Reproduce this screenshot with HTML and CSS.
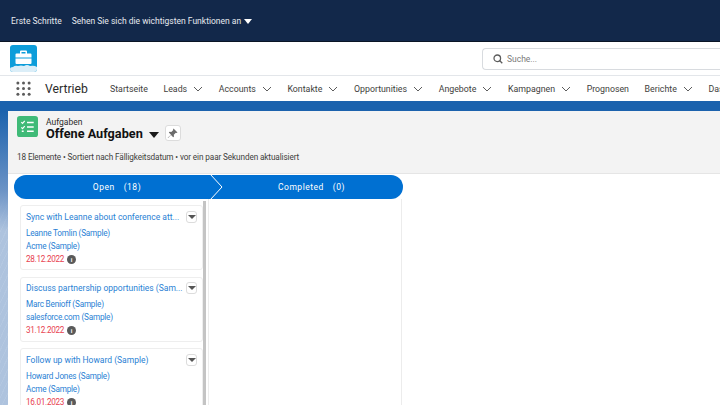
FILE: index.html
```html
<!DOCTYPE html>
<html lang="de">
<head>
<meta charset="utf-8">
<title>Offene Aufgaben</title>
<link rel="stylesheet" href="styles.css">
</head>
<body>
<header class="promo">
  <span>Erste Schritte</span>
  <span class="promo-menu">Sehen Sie sich die wichtigsten Funktionen an <i class="caret caret-white"></i></span>
</header>
<div class="brand">
  <svg class="logo" width="27" height="27" viewBox="0 0 27 27">
    <rect width="27" height="27" rx="3" fill="#0d9dda"/>
    <path d="M0 24q0-2 3-2q2-2 5-1q3-1 6 0q3-2 6 0q4-1 7 1v2q0 3-3 3H3q-3 0-3-3z" fill="#dbeef8"/>
    <path d="M10 8.500V6.500q0-1 1-1h5q1 0 1 1v2h3.500q1 0 1 1v3H5.500v-3q0-1 1-1zM11.500 8.500h4V7h-4zM5.500 13.500h16v4.500q0 1-1 1h-14q-1 0-1-1z" fill="#fff" fill-rule="evenodd"/>
  </svg>
  <div class="search">
    <svg class="search-icon" width="10" height="10" viewBox="0 0 14 14" fill="none" stroke="#5c5c5c" stroke-width="1.800"><circle cx="6" cy="6" r="4.600"/><path d="M9.200 9.200l3.800 3.800"/></svg>
    <span>Suche...</span>
  </div>
</div>
<nav class="nav">
  <svg class="waffle" width="15" height="15" viewBox="0 0 16 16" fill="#5c5c5c">
    <circle cx="2" cy="2" r="1.600"/><circle cx="8" cy="2" r="1.600"/><circle cx="14" cy="2" r="1.600"/>
    <circle cx="2" cy="8" r="1.600"/><circle cx="8" cy="8" r="1.600"/><circle cx="14" cy="8" r="1.600"/>
    <circle cx="2" cy="14" r="1.600"/><circle cx="8" cy="14" r="1.600"/><circle cx="14" cy="14" r="1.600"/>
  </svg>
  <span class="app-name">Vertrieb</span>
  <ul class="tabs">
    <li>Startseite</li>
    <li class="has-menu">Leads <svg class="chev" viewBox="0 0 10 6"><path d="M1 1l4 4 4-4"/></svg></li>
    <li class="has-menu">Accounts <svg class="chev" viewBox="0 0 10 6"><path d="M1 1l4 4 4-4"/></svg></li>
    <li class="has-menu">Kontakte <svg class="chev" viewBox="0 0 10 6"><path d="M1 1l4 4 4-4"/></svg></li>
    <li class="has-menu">Opportunities <svg class="chev" viewBox="0 0 10 6"><path d="M1 1l4 4 4-4"/></svg></li>
    <li class="has-menu">Angebote <svg class="chev" viewBox="0 0 10 6"><path d="M1 1l4 4 4-4"/></svg></li>
    <li class="has-menu">Kampagnen <svg class="chev" viewBox="0 0 10 6"><path d="M1 1l4 4 4-4"/></svg></li>
    <li>Prognosen</li>
    <li class="has-menu">Berichte <svg class="chev" viewBox="0 0 10 6"><path d="M1 1l4 4 4-4"/></svg></li>
    <li>Dashboards</li>
  </ul>
</nav>
<main class="stage">
  <section class="panel">
    <div class="panel-head">
      <div class="title-row">
        <svg class="task-icon" width="21" height="21" viewBox="0 0 22 22">
          <rect width="22" height="22" rx="3" fill="#3fba77"/>
          <path d="M4.500 6.500l1.300 1.300 2.300-2.600M4.500 12l1.300 1.300 2.300-2.600" fill="none" stroke="#fff" stroke-width="1.200"/>
          <path d="M10.500 6.800h7M10.500 11.500h7M10.500 16h7M5 16h2" stroke="#fff" stroke-width="1.600" fill="none"/>
        </svg>
        <div class="titles">
          <div class="eyebrow">Aufgaben</div>
          <h1>Offene Aufgaben <i class="caret caret-dark"></i></h1>
        </div>
        <button class="pin" type="button">
          <svg width="11" height="11" viewBox="0 0 11 11" fill="#6b6b6b"><path d="M6.500 0.500l4 4-1 .6-.7-.3-2 2 .2 1.700-.8.800-2.200-2.200L1 10l-.3-.3 3.300-3L1.800 4.500l.8-.8 1.700.2 2-2-.3-.7z"/></svg>
        </button>
      </div>
      <p class="meta">18 Elemente • Sortiert nach Fälligkeitsdatum • vor ein paar Sekunden aktualisiert</p>
    </div>
    <div class="board">
      <div class="path">
        <div class="stage-tab stage-open"><span>Open</span><span>(18)</span></div>
        <div class="stage-tab stage-done"><span>Completed</span><span>(0)</span></div>
        <svg class="path-sep" width="14" height="26" viewBox="0 0 14 26" fill="none" stroke="#fff" stroke-width="1"><path d="M1 0l12 13L1 26"/></svg>
      </div>
      <div class="columns">
        <div class="column column-open">
          <article class="card">
            <div class="card-top"><a class="card-title">Sync with Leanne about conference att...</a><span class="menu-btn"><i class="caret caret-grey"></i></span></div>
            <a class="link">Leanne Tomlin (Sample)</a>
            <a class="link">Acme (Sample)</a>
            <div class="due">28.12.2022 <span class="info">i</span></div>
          </article>
          <article class="card">
            <div class="card-top"><a class="card-title">Discuss partnership opportunities (Sam...</a><span class="menu-btn"><i class="caret caret-grey"></i></span></div>
            <a class="link">Marc Benioff (Sample)</a>
            <a class="link">salesforce.com (Sample)</a>
            <div class="due">31.12.2022 <span class="info">i</span></div>
          </article>
          <article class="card">
            <div class="card-top"><a class="card-title">Follow up with Howard (Sample)</a><span class="menu-btn"><i class="caret caret-grey"></i></span></div>
            <a class="link">Howard Jones (Sample)</a>
            <a class="link">Acme (Sample)</a>
            <div class="due">16.01.2023 <span class="info">i</span></div>
          </article>
          <div class="scrollbar"></div>
        </div>
        <div class="column column-done"></div>
      </div>
    </div>
  </section>
</main>
</body>
</html>
```
FILE: styles.css
```css
* { box-sizing: border-box; }
html, body { margin: 0; height: 405px; overflow: hidden; }
body { width: 720px; font-family: Roboto, "Open Sans", sans-serif; color: #3e3e3c; background: #fff; }

.caret { display: inline-block; width: 0; height: 0; border-left: 4.500px solid transparent; border-right: 4.500px solid transparent; border-top: 5px solid #fff; vertical-align: middle; }
.caret-dark { border-left-width: 5px; border-right-width: 5px; border-top: 6px solid #1a1a1a; margin-left: 3px; }
.caret-grey { border-left-width: 4px; border-right-width: 4px; border-top: 4px solid #555; }

.promo { height: 42px; background: #12284a; border-bottom: 1px solid #0a1526; display: flex; align-items: center; gap: 10px; padding: 0 0 0 11px; font-size: 8.500px; color: #e6e9ee; }
.promo-menu .caret { margin-left: 1px; }

.brand { height: 34px; background: #fff; display: flex; align-items: flex-start; justify-content: space-between; padding: 3px 0 0 10px; border-bottom: 1px solid #e3e6ea; }
.search { width: 238px; height: 22px; margin-top: 3px; border: 1px solid #d8dbdf; border-right: 0; border-radius: 4px 0 0 4px; display: flex; align-items: center; gap: 4px; padding-left: 10px; font-size: 8.500px; color: #7a7a7a; }

.nav { height: 25px; background: #fff; display: flex; align-items: center; padding-left: 16px; white-space: nowrap; overflow: hidden; }
.waffle { flex: none; }
.app-name { font-size: 12.200px; color: #2b2b2b; margin-left: 14px; width: 65px; flex: none; }
.tabs { list-style: none; display: flex; margin: 0; padding: 0; font-size: 8.800px; color: #3e3e3c; }
.tabs li { margin-right: 15.600px; display: flex; align-items: center; flex: none; }
.chev { width: 10px; height: 6px; margin-left: 6px; fill: none; stroke: #5c5c5c; stroke-width: 1; }

.stage { height: 304px; padding: 10px 0 0 8px; background-color: #aec3de; background-image: linear-gradient(#1b62ad, #1b62ad 10px, #6d94c6 90px, transparent 130px), repeating-linear-gradient(115deg, rgba(255,255,255,.08) 0 1px, transparent 1px 5px); }
.panel { height: 294px; background: #fff; }
.panel-head { height: 63px; background: #f3f3f3; border-bottom: 1px solid #e5e5e5; padding: 5px 0 0 9px; }
.title-row { display: flex; align-items: flex-start; }
.task-icon { flex: none; }
.titles { margin-left: 8px; padding-top: 1px; }
.eyebrow { font-size: 8.500px; line-height: 10px; color: #2b2b2b; }
h1 { margin: 0; font-size: 12.700px; line-height: 14px; font-weight: 700; color: #111; }
.pin { width: 16px; height: 16px; padding: 0; margin: 9px 0 0 6px; background: #fff; border: 1px solid #dcdcdc; border-radius: 3px; display: flex; align-items: center; justify-content: center; }
.meta { margin: 11px 0 0 0; font-size: 8.200px; letter-spacing: -.11px; line-height: 11px; color: #3e3e3c; }

.board { padding: 1px 0 0 6px; }
.path { position: relative; width: 389px; height: 24px; display: flex; color: #fff; font-size: 8.500px; letter-spacing: .5px; }
.stage-tab { background: #0070d2; display: flex; align-items: center; justify-content: center; gap: 9px; }
.stage-open { width: 196px; border-radius: 12px 0 0 12px; padding-left: 10px; }
.stage-done { width: 193px; border-radius: 0 12px 12px 0; padding-left: 10px; }
.path-sep { position: absolute; left: 195px; top: -1px; }

.columns { display: flex; }
.column { width: 195px; height: 208px; border-right: 1px solid #ececec; position: relative; overflow: hidden; }
.column-open { padding: 6px 0 0 6px; display: flex; flex-direction: column; gap: 6.500px; }
.column-done { width: 193px; }
.scrollbar { position: absolute; right: 2px; top: 2px; bottom: 0; width: 3px; background: #c4c4c4; }

.card { width: 183px; flex: none; height: 65px; background: #fff; border: 1px solid #eeeeee; border-radius: 3px; padding: 4.500px 5px 0 5px; font-size: 8.200px; letter-spacing: -.2px; }
.card-top { display: flex; justify-content: space-between; height: 16px; align-items: flex-start; }
.card-title { color: #2a7fd4; font-size: 8.500px; letter-spacing: 0; line-height: 13px; white-space: nowrap; }
.menu-btn { width: 11px; height: 12px; flex: none; border: 1px solid #dcdcdc; border-radius: 3px; display: flex; align-items: center; justify-content: center; background: #fff; }
.link { display: block; color: #2a7fd4; line-height: 13px; }
.due { color: #e8414f; line-height: 13px; letter-spacing: -.3px; display: flex; align-items: center; gap: 3px; }
.info { width: 9px; height: 9px; border-radius: 50%; background: #5a5a5a; color: #fff; font-size: 6px; letter-spacing: 0; line-height: 9px; font-weight: 700; text-align: center; }
```
